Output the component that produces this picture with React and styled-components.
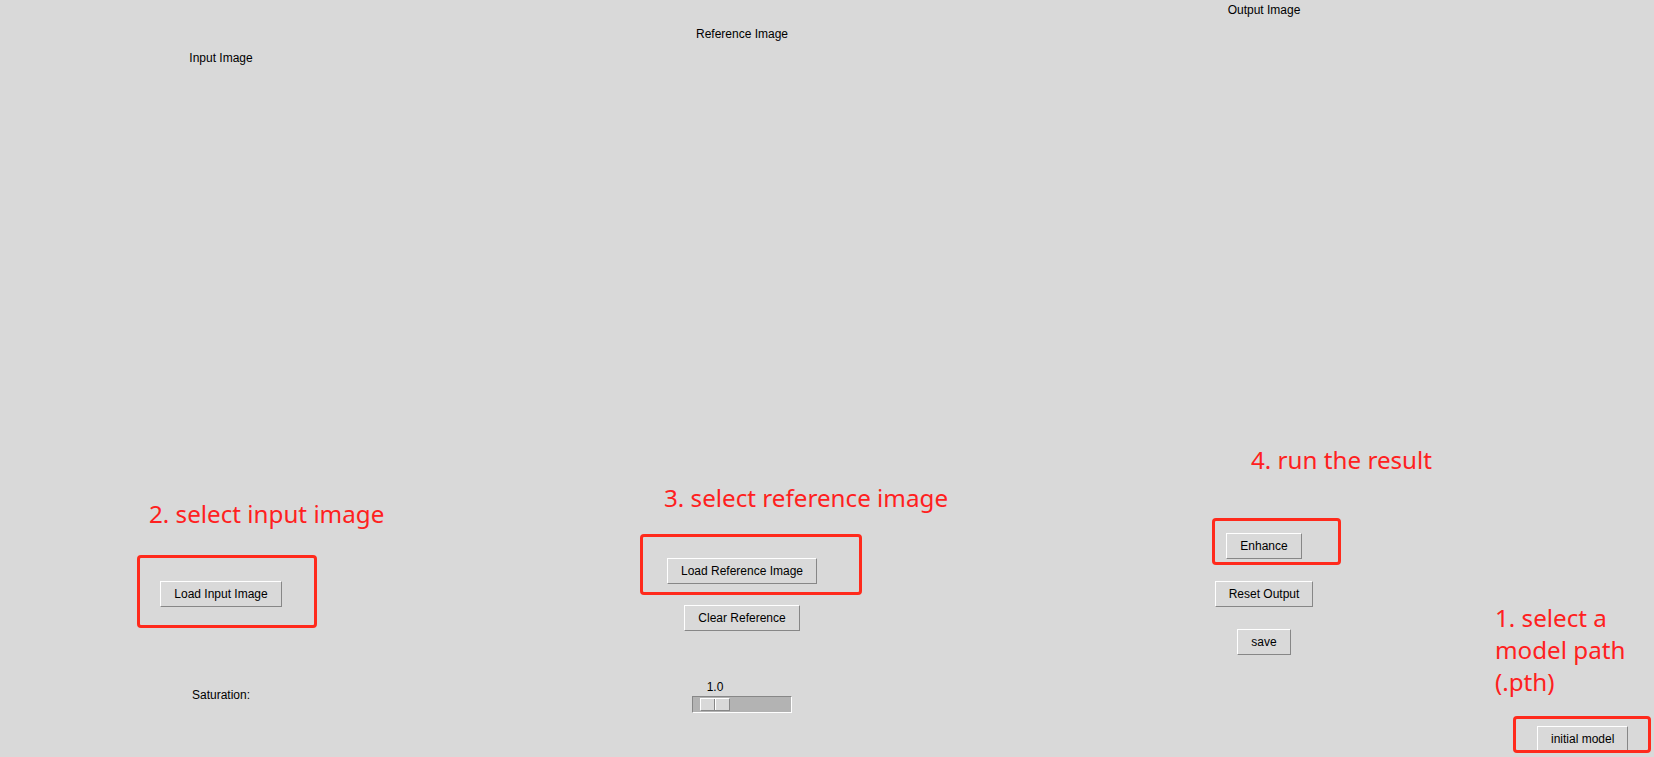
import styled, { createGlobalStyle } from 'styled-components';

const GlobalStyle = createGlobalStyle`
  html, body {
    margin: 0;
    padding: 0;
    background: #d9d9d9;
  }
  body {
    font-family: 'Liberation Sans', Arial, sans-serif;
  }
`;

const App = () => {
  return (
    <>
      <GlobalStyle />
      <Window>
        <Column $top={51}>
          <PaneTitle>Input Image</PaneTitle>
          <ImagePane $height={433} />
          <Note $left={149}>2. select input image</Note>
          <Controls $top={51} $gap={22}>
            <Annotated>
              <TkButton>Load Input Image</TkButton>
              <Frame $t={-26} $r={-35} $b={-21} $l={-23} />
            </Annotated>
          </Controls>
          <FieldLabel $top={81}>Saturation:</FieldLabel>
        </Column>

        <Column $top={27}>
          <PaneTitle>Reference Image</PaneTitle>
          <ImagePane $height={441} />
          <Note $left={222}>3. select reference image</Note>
          <Controls $top={44} $gap={21}>
            <Annotated>
              <TkButton>Load Reference Image</TkButton>
              <Frame $t={-24} $r={-45} $b={-11} $l={-27} />
            </Annotated>
            <TkButton>Clear Reference</TkButton>
          </Controls>
          <Scale>
            <ScaleValue $offset={8}>1.0</ScaleValue>
            <Trough $offset={7}>
              <Slider>
                <Groove />
              </Slider>
            </Trough>
          </Scale>
        </Column>

        <Column $top={3}>
          <PaneTitle>Output Image</PaneTitle>
          <ImagePane $height={427} />
          <Note $left={209}>4. run the result</Note>
          <Controls $top={57} $gap={22}>
            <Annotated>
              <TkButton>Enhance</TkButton>
              <Frame $t={-15} $r={-39} $b={-6} $l={-14} />
            </Annotated>
            <TkButton>Reset Output</TkButton>
            <TkButton>save</TkButton>
          </Controls>
        </Column>

        <ModelColumn>
          <Note $left={0}>{'1. select a\nmodel path\n(.pth)'}</Note>
          <Controls $top={28} $gap={0} $align="flex-start" $indent={42}>
            <Annotated>
              <TkButton>initial model</TkButton>
              <Frame $t={-10} $r={-23} $b={-1} $l={-24} />
            </Annotated>
          </Controls>
        </ModelColumn>
      </Window>
    </>
  );
};

export default App;

const Window = styled.div`
  width: 1654px;
  height: 757px;
  overflow: hidden;
  background: #d9d9d9;
  display: grid;
  grid-template-columns: 442px 600px 444px 1fr;
  align-items: start;
`;

const Column = styled.div`
  display: flex;
  flex-direction: column;
  align-items: center;
  padding-top: ${(props) => props.$top}px;
`;

const ModelColumn = styled.div`
  display: flex;
  flex-direction: column;
  align-items: flex-start;
  padding: 602px 0 0 9px;
`;

const PaneTitle = styled.div`
  font-size: 12px;
  line-height: 14px;
  color: #000;
  white-space: nowrap;
`;

const ImagePane = styled.div`
  width: 100%;
  height: ${(props) => props.$height}px;
`;

const Note = styled.div`
  align-self: flex-start;
  margin-left: ${(props) => props.$left}px;
  font-family: 'Noto Sans', 'Open Sans', sans-serif;
  font-size: 24.2px;
  line-height: 32px;
  color: #ff2020;
  white-space: pre;
`;

const Controls = styled.div`
  display: flex;
  flex-direction: column;
  align-items: ${(props) => props.$align || 'center'};
  gap: ${(props) => props.$gap}px;
  margin-top: ${(props) => props.$top}px;
  padding-left: ${(props) => props.$indent || 0}px;
`;

const Annotated = styled.div`
  position: relative;
  display: flex;
`;

const Frame = styled.div`
  position: absolute;
  top: ${(props) => props.$t}px;
  right: ${(props) => props.$r}px;
  bottom: ${(props) => props.$b}px;
  left: ${(props) => props.$l}px;
  border: 3px solid #ff2a1c;
  border-radius: 4px;
  pointer-events: none;
`;

const TkButton = styled.button`
  box-sizing: border-box;
  height: 26px;
  padding: 0 13px;
  margin: 0;
  font-family: 'Liberation Sans', Arial, sans-serif;
  font-size: 12px;
  line-height: 14px;
  color: #000;
  background: #d9d9d9;
  border: 1px solid;
  border-color: #ffffff #878787 #878787 #ffffff;
  border-radius: 0;
  white-space: nowrap;
  cursor: pointer;

  &:hover {
    background: #ececec;
  }
`;

const FieldLabel = styled.div`
  margin-top: ${(props) => props.$top}px;
  font-size: 12px;
  line-height: 14px;
  color: #000;
`;

const Scale = styled.div`
  display: flex;
  flex-direction: column;
  width: 100px;
  margin-top: 49px;
`;

const ScaleValue = styled.div`
  width: 30px;
  margin: 0 0 2px ${(props) => props.$offset}px;
  text-align: center;
  font-size: 12px;
  line-height: 14px;
  color: #000;
`;

const Trough = styled.div`
  box-sizing: border-box;
  display: flex;
  height: 17px;
  padding: 1px 0 1px ${(props) => props.$offset}px;
  background: #b3b3b3;
  border: 1px solid;
  border-color: #878787 #ffffff #ffffff #878787;
`;

const Slider = styled.div`
  box-sizing: border-box;
  display: flex;
  justify-content: center;
  width: 30px;
  height: 13px;
  background: #d9d9d9;
  border: 1px solid;
  border-color: #ffffff #878787 #878787 #ffffff;
`;

const Groove = styled.div`
  box-sizing: border-box;
  width: 2px;
  height: 100%;
  border-left: 1px solid #878787;
  border-right: 1px solid #ffffff;
`;
